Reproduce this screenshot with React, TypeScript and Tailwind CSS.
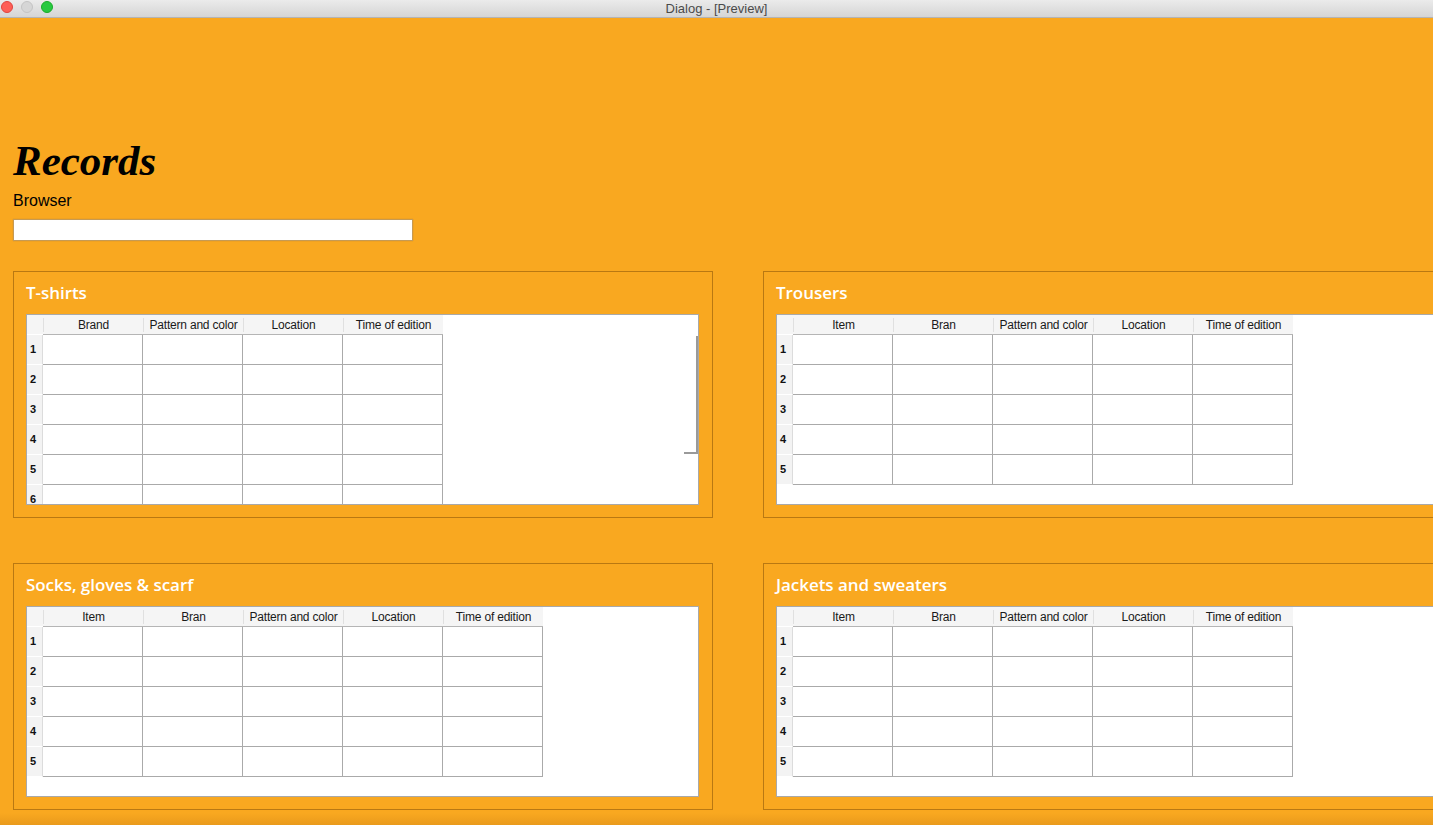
import React from "react";

type TableProps = {
  columns: string[];
  rows: number;
  width: number;
  scrollMark?: boolean;
};

function DataTable({ columns, rows, width, scrollMark }: TableProps) {
  return (
    <div
      className="relative h-[191px] shrink-0 overflow-hidden border border-[#a9a9a9] bg-white"
      style={{ width }}
    >
      <div className="flex h-[20px]">
        <div className="h-[19px] w-[16px] shrink-0 bg-[#f5f5f5]" />
        {columns.map((c, i) => (
          <div
            key={i}
            className="flex h-[20px] w-[100px] shrink-0 items-center justify-center border-b border-[#b5b5b5] bg-[#f5f5f5] text-[12px] text-[#1a1a1a]"
          >
            <span className="flex h-[14px] w-[1px] shrink-0 bg-[#e0e0e0]" />
            <span className="flex-1 text-center leading-[14px] tracking-[-0.2px]">{c}</span>
          </div>
        ))}
      </div>
      {Array.from({ length: rows }).map((_, r) => (
        <div key={r} className="flex h-[30px]">
          <div className="flex h-[30px] w-[16px] shrink-0 items-center border-r border-b border-r-[#dcdcdc] border-b-white bg-[#f3f3f3] pl-[3px] text-[11px] font-bold text-[#111]">
            {r + 1}
          </div>
          {columns.map((_, i) => (
            <div
              key={i}
              className="h-[30px] w-[100px] shrink-0 border-r border-b border-[#aaaaaa]"
            />
          ))}
        </div>
      ))}
      {scrollMark && (
        <div className="absolute top-[21px] right-[0px] h-[118px] w-[14px] border-r-2 border-b-2 border-[#9a9a9a]" />
      )}
    </div>
  );
}

function Group({
  title,
  columns,
  rows,
  scrollMark,
  tableWidth,
}: {
  title: string;
  columns: string[];
  rows: number;
  scrollMark?: boolean;
  tableWidth: number;
}) {
  return (
    <div className="flex h-[247px] w-[700px] shrink-0 flex-col border border-[#b97812] pl-[12px]">
      <div className="flex h-[42px] items-center pb-[1px] text-[17px] leading-none font-semibold text-white [font-family:'Open_Sans',sans-serif] tracking-[-0.05px]">
        {title}
      </div>
      <DataTable columns={columns} rows={rows} width={tableWidth} scrollMark={scrollMark} />
    </div>
  );
}

export default function App() {
  const five = ["Item", "Bran", "Pattern and color", "Location", "Time of edition"];
  const four = ["Brand", "Pattern and color", "Location", "Time of edition"];
  return (
    <div className="relative flex h-[825px] w-[1433px] flex-col overflow-hidden bg-[#f9a820] [font-family:'Liberation_Sans',Arial,sans-serif]">
      <div className="relative flex h-[18px] shrink-0 items-center justify-center border-b border-[#b4b4b4] bg-gradient-to-b from-[#ebebeb] to-[#d5d5d5]">
        <div className="absolute top-[1px] left-[1px] flex gap-[8px]">
          <span className="h-[12px] w-[12px] rounded-full border border-[#e0443e] bg-[#fe5f57]" />
          <span className="h-[12px] w-[12px] rounded-full border border-[#c4c4c4] bg-[#d6d6d6]" />
          <span className="h-[12px] w-[12px] rounded-full border border-[#1aab29] bg-[#28c940]" />
        </div>
        <span className="text-[13px] leading-none text-[#4a4a4a]">Dialog - [Preview]</span>
      </div>

      <div className="flex flex-col pl-[13px]">
        <div className="mt-[120px] h-[46px] text-[43px] leading-[46px] font-semibold italic text-black [font-family:'Liberation_Serif',serif]">
          Records
        </div>
        <div className="mt-[8px] text-[16px] leading-[18px] font-medium text-black">Browser</div>
        <div className="mt-[9px] h-[22px] w-[400px] border border-[#c59a55] bg-white shadow-[0_0_1px_#c08a30]" />

        <div className="mt-[30px] flex gap-[50px]">
          <Group title="T-shirts" columns={four} rows={6} tableWidth={673} scrollMark />
          <Group title="Trousers" columns={five} rows={5} tableWidth={700} />
        </div>
        <div className="mt-[45px] flex gap-[50px]">
          <Group title="Socks, gloves & scarf" columns={five} rows={5} tableWidth={673} />
          <Group title="Jackets and sweaters" columns={five} rows={5} tableWidth={700} />
        </div>
      </div>
      <div className="pointer-events-none absolute right-0 bottom-0 left-0 h-[12px] bg-gradient-to-b from-transparent to-[#e99a1c]" />
    </div>
  );
}
